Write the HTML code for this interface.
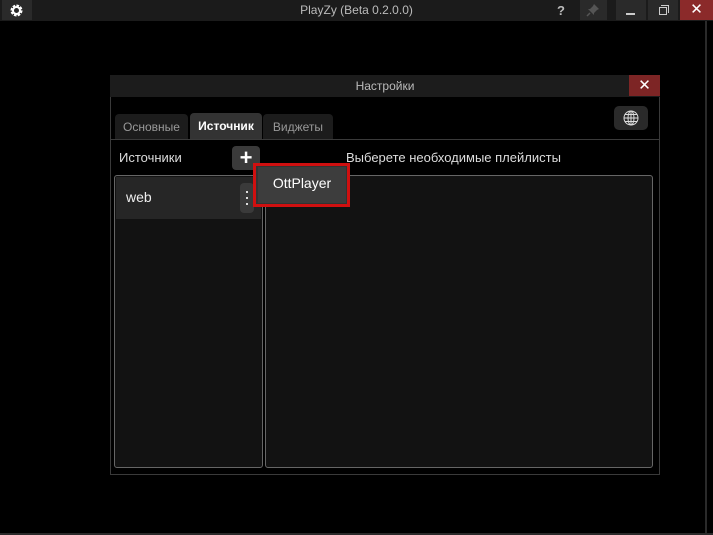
<!DOCTYPE html>
<html><head><meta charset="utf-8"><style>
*{margin:0;padding:0;box-sizing:border-box}
body{width:713px;height:535px;background:#000;overflow:hidden;position:relative;font-family:"Liberation Sans","DejaVu Sans",sans-serif;color:#ddd}
.a{position:absolute}
.d{position:absolute;left:6px;width:2px;height:2px;background:#ddd}
</style></head><body>
<div class="a" style="left:0;top:0;width:713px;height:21px;background:#1b1b1b"></div>
<div class="a" style="left:2px;top:0;width:30px;height:20px;background:#2a2a2a"></div>
<svg class="a" style="left:10px;top:4px" width="13" height="13" viewBox="0 0 13 13"><circle cx="6.5" cy="6.5" r="4.5" fill="none" stroke="#fff" stroke-width="3" stroke-dasharray="2.4 1.1"/><circle cx="6.5" cy="6.5" r="3.5" fill="none" stroke="#fff" stroke-width="2"/></svg>
<div class="a" style="left:0;top:0;width:713px;text-align:center;font-size:12px;line-height:21px;color:#bbb">PlayZy (Beta 0.2.0.0)</div>
<div class="a" style="left:557px;top:3px;font-size:13px;font-weight:bold;color:#bbb">?</div>
<div class="a" style="left:580px;top:0;width:27px;height:20px;background:#2a2a2a"></div>
<svg class="a" style="left:586px;top:3px" width="14" height="14" viewBox="0 0 14 14"><path d="M8 1 L13 6 L11 7 L8 10 L8 12 L2 6 L4 6 L7 3 Z" fill="#555"/><path d="M4 10 L1 13" stroke="#555" stroke-width="1.5"/></svg>
<div class="a" style="left:616px;top:0;width:30px;height:20px;background:#2a2a2a"><div class="a" style="left:10px;top:13px;width:9px;height:2px;background:#ccc"></div></div>
<div class="a" style="left:648px;top:0;width:30px;height:20px;background:#2a2a2a"><div class="a" style="left:11px;top:7px;width:8px;height:8px;border:1px solid #ccc"></div><div class="a" style="left:13px;top:5px;width:8px;height:8px;border-top:1px solid #ccc;border-right:1px solid #ccc"></div></div>
<div class="a" style="left:680px;top:0;width:33px;height:20px;background:#8b2a2a;color:#fff;text-align:center;line-height:20px;font-size:15px;font-weight:bold">✕</div>
<div class="a" style="left:705px;top:21px;width:2px;height:514px;background:#2a2a2a"></div>
<div class="a" style="left:0;top:533px;width:713px;height:2px;background:#2a2a2a"></div>

<div class="a" style="left:110px;top:75px;width:550px;height:400px;border:1px solid #3a3a3a;background:#000"></div>
<div class="a" style="left:110px;top:75px;width:550px;height:22px;background:#1c1c1c;text-align:center;font-size:12px;line-height:22px;color:#bbb">Настройки</div>
<div class="a" style="left:629px;top:75px;width:31px;height:21px;background:#7d2525;color:#fff;text-align:center;line-height:21px;font-size:15px;font-weight:bold">✕</div>
<div class="a" style="left:614px;top:106px;width:34px;height:24px;background:#2a2a2a;border-radius:5px"></div>
<svg class="a" style="left:622px;top:109px" width="18" height="18" viewBox="0 0 18 18" fill="none" stroke="#ddd" stroke-width="1"><circle cx="9" cy="9" r="7"/><ellipse cx="9" cy="9" rx="3" ry="7"/><path d="M2 9H16M3 5.5H15M3 12.5H15M9 2V16"/></svg>

<div class="a" style="left:115px;top:114px;width:73px;height:25px;background:#1c1c1c;border-radius:4px 4px 0 0;font-size:12px;color:#999;text-align:center;line-height:26px">Основные</div>
<div class="a" style="left:190px;top:113px;width:72px;height:26px;background:#333;border-radius:4px 4px 0 0;font-size:12px;color:#fff;text-align:center;line-height:27px;font-weight:bold">Источник</div>
<div class="a" style="left:263px;top:114px;width:70px;height:25px;background:#1c1c1c;border-radius:4px 4px 0 0;font-size:12px;color:#999;text-align:center;line-height:26px">Виджеты</div>
<div class="a" style="left:111px;top:139px;width:548px;height:1px;background:#3a3a3a"></div>

<div class="a" style="left:119px;top:150px;font-size:13px;color:#ddd">Источники</div>
<div class="a" style="left:232px;top:146px;width:28px;height:24px;background:#3a3a3a;border-radius:4px;color:#fff;text-align:center;line-height:23px;font-size:22px;font-weight:bold">+</div>
<div class="a" style="left:346px;top:150px;font-size:13px;color:#ddd">Выберете необходимые плейлисты</div>

<div class="a" style="left:114px;top:175px;width:149px;height:293px;background:#121212;border:1px solid #666;border-radius:3px"></div>
<div class="a" style="left:116px;top:177px;width:145px;height:42px;background:#262626"></div>
<div class="a" style="left:126px;top:189px;font-size:14px;color:#eee">web</div>
<div class="a" style="left:240px;top:183px;width:14px;height:30px;background:#3a3a3a;border-radius:4px"><div class="d" style="top:8px"></div><div class="d" style="top:14px"></div><div class="d" style="top:20px"></div></div>
<div class="a" style="left:265px;top:175px;width:388px;height:293px;background:#121212;border:1px solid #666;border-radius:3px"></div>

<div class="a" style="left:253px;top:163px;width:97px;height:44px;border:3px solid #d01010;background:#333"></div>
<div class="a" style="left:258px;top:167px;width:88px;height:36px;background:#3d3d3d;color:#fff;font-size:14px;text-align:center;line-height:32px">OttPlayer</div>
</body></html>
